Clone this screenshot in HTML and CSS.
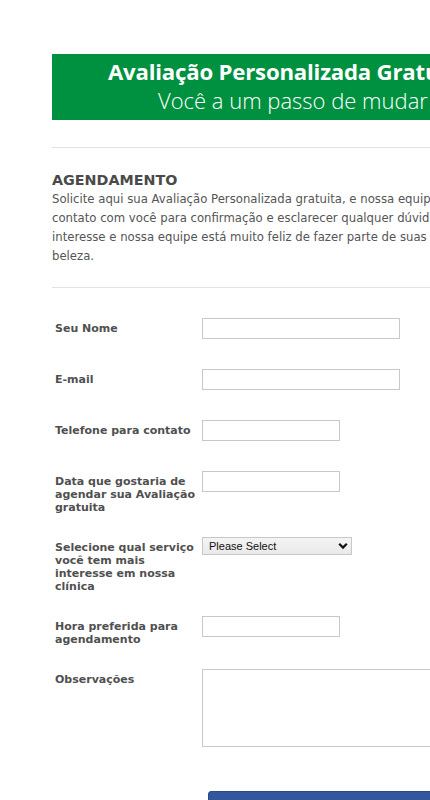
FILE: index.html
```html
<!DOCTYPE html>
<html lang="pt-BR">
<head>
<meta charset="utf-8">
<title>Agendamento</title>
<link rel="stylesheet" href="styles.css">
</head>
<body>
<div class="viewport">
  <div class="page">
    <div class="banner">
      <div class="banner-title">Avaliação Personalizada Gratuita</div>
      <div class="banner-sub">Você a um passo de mudar sua vida</div>
    </div>
    <hr class="rule">
    <div class="intro">
      <h2 class="intro-title">AGENDAMENTO</h2>
      <p class="intro-text">Solicite aqui sua Avaliação Personalizada gratuita, e nossa equipe entrará em<br>contato com você para confirmação e esclarecer qualquer dúvida sobre o seu<br>interesse e nossa equipe está muito feliz de fazer parte de suas conquistas de<br>beleza.</p>
    </div>
    <hr class="rule">
    <form class="form">
      <div class="row">
        <label class="label">Seu Nome</label>
        <input class="field field-long" type="text">
      </div>
      <div class="row">
        <label class="label">E-mail</label>
        <input class="field field-long" type="text">
      </div>
      <div class="row">
        <label class="label">Telefone para contato</label>
        <input class="field field-short" type="text">
      </div>
      <div class="row">
        <label class="label">Data que gostaria de agendar sua Avaliação gratuita</label>
        <input class="field field-short" type="text">
      </div>
      <div class="row">
        <label class="label">Selecione qual serviço você tem mais interesse em nossa clínica</label>
        <div class="select">
          <span class="select-text">Please Select</span>
          <svg class="select-arrow" width="10" height="8" viewBox="0 0 10 8"><path d="M1.2 1.8 L5 5.6 L8.8 1.8" fill="none" stroke="#111" stroke-width="2.2"/></svg>
        </div>
      </div>
      <div class="row">
        <label class="label">Hora preferida para agendamento</label>
        <input class="field field-short" type="text">
      </div>
      <div class="row">
        <label class="label">Observações</label>
        <textarea class="area"></textarea>
      </div>
      <div class="row row-button">
        <button class="submit" type="button">Enviar</button>
      </div>
    </form>
  </div>
</div>
</body>
</html>
```
FILE: styles.css
```css
html, body {
  margin: 0;
  padding: 0;
  background: #fff;
}
.viewport {
  width: 430px;
  overflow: hidden;
}
.page {
  width: 650px;
  padding: 54px 0 0 52px;
  font-family: "DejaVu Sans", Verdana, sans-serif;
  color: #555;
}
.banner {
  height: 66px;
  background: #009140;
  color: #fff;
  font-family: "Open Sans", "Noto Sans", sans-serif;
  box-sizing: border-box;
  padding: 4px 0 0 56px;
}
.banner-title {
  font-size: 22.2px;
  font-weight: 700;
  line-height: 28px;
  letter-spacing: -0.2px;
}
.banner-sub {
  font-size: 22px;
  font-weight: 300;
  line-height: 28px;
  padding-left: 50px;
}
.rule {
  border: 0;
  border-top: 1px solid #e3e3e3;
  margin: 27px 0 0;
  height: 0;
}
.intro {
  padding: 23px 0 21px;
}
.intro-title {
  margin: 0;
  font-size: 14.3px;
  font-weight: 700;
  line-height: 18px;
  color: #4a4a4a;
}
.intro-text {
  margin: 1px 0 0;
  font-size: 11.7px;
  line-height: 19px;
  color: #555;
  white-space: nowrap;
}
.intro + .rule {
  margin-top: 0;
}
.form {
  padding-top: 15px;
}
.row {
  display: flex;
  align-items: flex-start;
  padding: 15px 0 15px 3px;
}
.label {
  width: 147px;
  flex: none;
  font-size: 11px;
  font-weight: 700;
  line-height: 13px;
  color: #505050;
  padding: 3.5px 4px 0 0;
  margin-bottom: -6.5px;
  box-sizing: border-box;
}
.field {
  height: 21px;
  box-sizing: border-box;
  border: 1px solid #c8c8c8;
  margin: 0;
  padding: 0 4px;
  background: #fff;
}
.field-long {
  width: 198px;
}
.field-short {
  width: 138px;
}
.select {
  width: 150px;
  height: 18px;
  box-sizing: border-box;
  border: 1px solid #c8c8c8;
  background: linear-gradient(#f4f4f4, #e9e9e9);
  display: flex;
  align-items: center;
  justify-content: space-between;
  padding: 0 3px 0 6px;
  font-family: "Liberation Sans", Arial, sans-serif;
  font-size: 11px;
  color: #111;
}
.select-arrow {
  display: block;
}
.area {
  width: 300px;
  height: 78px;
  box-sizing: border-box;
  border: 1px solid #c8c8c8;
  margin: 0;
  resize: none;
}
.row-button {
  padding-top: 29px;
}
.submit {
  margin-left: 153px;
  width: 240px;
  height: 34px;
  background: #34569c;
  border: 1px solid #2b4a8a;
  border-radius: 3px;
  color: #fff;
  font-family: "DejaVu Sans", sans-serif;
  font-size: 14px;
  font-weight: 700;
}
```
